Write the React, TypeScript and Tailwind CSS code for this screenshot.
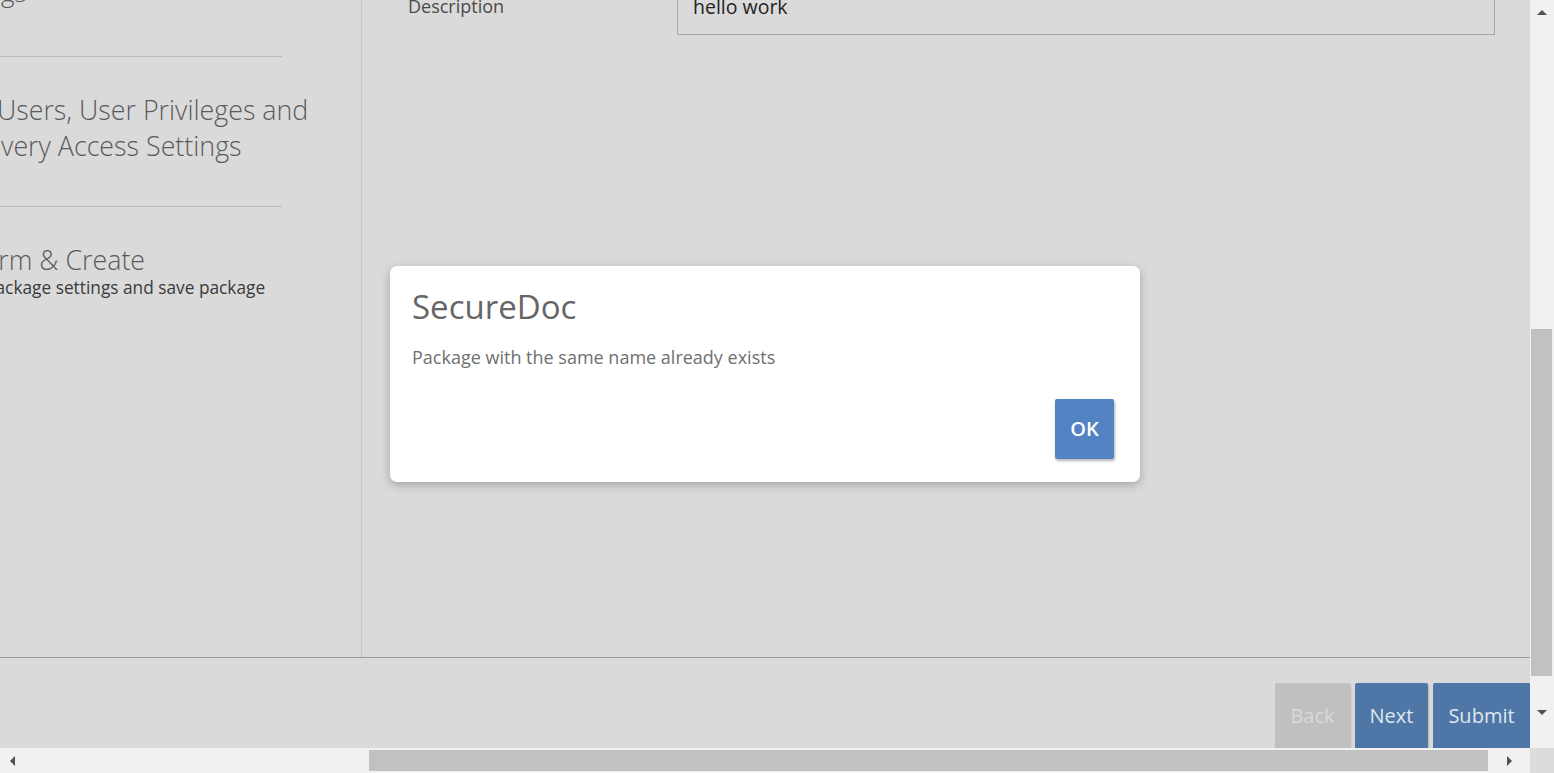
export default function App() {
  return (
    <div
      className="relative flex h-[773px] w-[1554px] flex-col overflow-hidden bg-[#dadada]"
      style={{ fontFamily: '"Open Sans", "Liberation Sans", sans-serif' }}
    >
      <div className="flex h-[748px]">
        {/* page content, scrolled */}
        <div className="relative flex w-[1530px] flex-col">
          <div className="flex h-[657px]">
            <div className="w-[362px] shrink-0 overflow-hidden border-r border-dotted border-[#b8b8b8]">
              <div className="-mt-[62px] -ml-[58px] w-[340px]">
                <div className="text-[26px] leading-[36px] font-light whitespace-nowrap text-[#5a5a5a]">
                  Package
                  <br />
                  <span className="-ml-[8px]">Settings</span>
                </div>
                <div className="mt-[46px] h-px bg-[#bdbdbd]" />
                <div className="mt-[35px] text-[26.8px] leading-[36px] font-light whitespace-nowrap text-[#5a5a5a]">
                  Add Users, User Privileges and
                  <br />
                  Recovery Access Settings
                </div>
                <div className="mt-[42px] h-px bg-[#bdbdbd]" />
                <div className="mt-[35px] -ml-[6px] text-[26.8px] leading-[36px] font-light whitespace-nowrap text-[#5a5a5a]">
                  Confirm &amp; Create
                </div>
                <div className="-mt-[1px] -ml-[18px] text-[17.3px] leading-[22px] whitespace-nowrap text-[#3a3a3a]">
                  Review package settings and save package
                </div>
              </div>
            </div>
            <div className="flex flex-1 items-start">
              <div className="-mt-[5px] flex w-full items-start">
                <div className="mt-[-2px] ml-[46px] w-[269px] text-[18px] text-[#4a4a4a]">Description</div>
                <div className="flex h-[40px] w-[818px] items-end border-r border-b border-l border-[#a8a8a8] px-[15px] pb-[15px]">
                  <span className="text-[19.5px] leading-[24px] text-[#222]">hello work</span>
                </div>
              </div>
            </div>
          </div>
          <div className="h-px bg-[#9a9a9a]" />
          <div className="flex flex-1 items-start justify-end gap-[5px] overflow-hidden pt-[25px]">
            <button className="h-[66px] w-[75px] rounded-t-[2px] bg-[#c0c0c0] text-[20px] text-[#d9d9d9] shadow-[1px_1px_2px_rgba(0,0,0,0.15)]">
              Back
            </button>
            <button className="h-[66px] w-[73px] rounded-t-[2px] bg-[#4e77a8] text-[20px] text-[#dfe6ee] shadow-[1px_1px_2px_rgba(0,0,0,0.15)]">
              Next
            </button>
            <button className="h-[66px] w-[97px] rounded-tl-[2px] bg-[#4e77a8] text-[20px] text-[#dfe6ee]">
              Submit
            </button>
          </div>

          {/* modal */}
          <div className="absolute inset-0 flex items-center justify-center">
            <div className="flex h-[216px] w-[750px] flex-col rounded-[7px] bg-white px-[22px] pt-[20px] shadow-[0_3px_10px_rgba(0,0,0,0.25)]">
              <div className="text-[33px] leading-[42px] text-[#666]">SecureDoc</div>
              <div className="mt-[17px] text-[18px] leading-[24px] text-[#707070]">
                Package with the same name already exists
              </div>
              <div className="mt-[30px] flex justify-end pr-[4px]">
                <button className="h-[60px] w-[59px] rounded-[2px] bg-[#5383c3] text-[20px] font-semibold text-white shadow-[1px_2px_3px_rgba(0,0,0,0.3)]">
                  OK
                </button>
              </div>
            </div>
          </div>
        </div>

        {/* vertical scrollbar */}
        <div className="flex w-[24px] flex-col bg-[#f1f1f1]">
          <div className="flex h-[24px] items-center justify-center">
            <div className="h-0 w-0 border-r-[5px] border-b-[5px] border-l-[5px] border-r-transparent border-b-[#505050] border-l-transparent" />
          </div>
          <div className="mt-[305px] ml-[1px] h-[347px] w-[21px] bg-[#c1c1c1]" />
          <div className="flex flex-1 items-center justify-center">
            <div className="h-0 w-0 border-t-[5px] border-r-[5px] border-l-[5px] border-t-[#505050] border-r-transparent border-l-transparent" />
          </div>
        </div>
      </div>

      {/* horizontal scrollbar */}
      <div className="flex h-[25px]">
        <div className="flex w-[1530px] items-center bg-[#f1f1f1]">
          <div className="flex w-[24px] items-center justify-center">
            <div className="h-0 w-0 border-t-[5px] border-r-[5px] border-b-[5px] border-t-transparent border-r-[#505050] border-b-transparent" />
          </div>
          <div className="ml-[345px] h-[21px] w-[1119px] bg-[#c1c1c1]" />
          <div className="flex flex-1 items-center justify-center">
            <div className="h-0 w-0 border-t-[5px] border-b-[5px] border-l-[5px] border-t-transparent border-b-transparent border-l-[#505050]" />
          </div>
        </div>
        <div className="w-[24px] bg-[#dcdcdc]" />
      </div>
    </div>
  )
}
